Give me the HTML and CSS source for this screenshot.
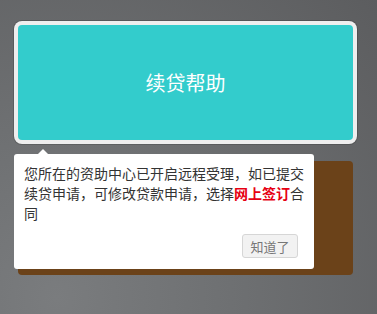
FILE: index.html
```html
<!DOCTYPE html>
<html>
<head>
    <title>续贷帮助</title>
    <link rel="stylesheet" href="styles.css">
</head>
<body>
    <div class="page">
        <div class="card card-help highlight">
            <span class="card-title">续贷帮助</span>
        </div>
        <div class="card card-brown"></div>

        <!-- guide tip over the second card -->
        <div class="tip">
            <span class="tip-arrow"></span>
            <p class="tip-text">您所在的资助中心已开启远程受理，如已提交续贷申请，可修改贷款申请，选择<b class="hot">网上签订</b>合同</p>
            <div class="tip-foot">
                <button class="tip-btn">知道了</button>
            </div>
        </div>
    </div>
</body>
</html>
```

FILE: styles.css
```css
html, body {
    margin: 0;
    padding: 0;
    height: 100%;
}
body {
    font-family: "Liberation Sans", "Noto Sans CJK SC", sans-serif;
    background: radial-gradient(circle at 15% 95%, #7a7c7e 0%, #6e7072 40%, #5c5d5f 100%);
    overflow: hidden;
}
.page {
    position: relative;
    padding: 25px 24px 0 18px;
    display: flex;
    flex-direction: column;
    gap: 21px;
}
.card {
    width: 335px;
    border-radius: 4px;
}
.card-help {
    height: 115px;
    background-color: #33cccc;
    display: flex;
    align-items: center;
    justify-content: center;
}
.highlight {
    box-shadow: 0 0 0 4px #eeeeee, 0 0 0 5px rgba(0, 0, 0, 0.15);
}
.card-title {
    color: #fff;
    font-size: 20px;
}
.card-brown {
    height: 114px;
    background-color: #6b4219;
}
.tip {
    position: absolute;
    left: 14px;
    top: 154px;
    width: 300px;
    box-sizing: border-box;
    padding: 10px 10px 11px 10px;
    background-color: #fff;
    border-radius: 3px;
}
.tip-arrow {
    position: absolute;
    left: 24px;
    top: -5px;
    width: 0;
    height: 0;
    border-left: 5px solid transparent;
    border-right: 5px solid transparent;
    border-bottom: 5px solid #fff;
}
.tip-text {
    margin: 0;
    font-size: 14px;
    line-height: 20px;
    color: #333;
}
.hot {
    color: #e60012;
}
.tip-foot {
    display: flex;
    justify-content: flex-end;
    margin-top: 10px;
    padding-right: 6px;
}
.tip-btn {
    width: 56px;
    height: 24px;
    padding: 0;
    font-family: inherit;
    font-size: 13px;
    color: #777;
    background-color: #f2f2f2;
    border: 1px solid #d6d6d6;
    border-radius: 3px;
}
```
